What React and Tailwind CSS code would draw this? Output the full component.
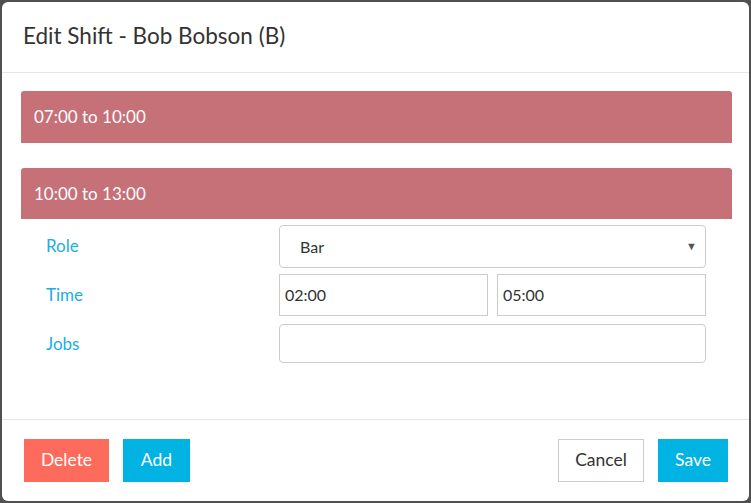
import React from "react";

export default function App() {
  const font = { fontFamily: "Lato, 'Noto Sans', sans-serif" };
  return (
    <div className="w-[751px] h-[503px] bg-[#505050] p-[2px]" style={font}>
      <div className="w-full h-full bg-white rounded-[6px] flex flex-col overflow-hidden">
        <div className="h-[71px] shrink-0 border-b border-[#e5e5e5] flex items-center pl-[21px]">
          <h1 className="text-[22.5px] text-[#333] leading-none -mt-[2px]">Edit Shift - Bob Bobson (B)</h1>
        </div>
        <div className="flex-1 pt-[18px] pl-[19px] pr-[17px]">
          <div className="h-[52px] bg-[#c67078] rounded-t-[3px] flex items-center pl-[13px]">
            <span className="text-white text-[17px]">07:00 to 10:00</span>
          </div>
          <div className="mt-[25px] h-[51px] bg-[#c67078] rounded-t-[3px] flex items-center pl-[13px]">
            <span className="text-white text-[17px]">10:00 to 13:00</span>
          </div>
          <div className="flex flex-col gap-[6px] mt-[6px] pl-[25px] pr-[26px]">
            <div className="flex items-center">
              <label className="w-[233px] text-[17px] text-[#1aaee3] -mt-[2px]">Role</label>
              <div className="flex-1 h-[43px] border border-[#ccc] rounded-[4px] flex items-center pl-[20px] pr-[8px] justify-between">
                <span className="text-[16px] text-[#333]">Bar</span>
                <span className="text-[11px] text-[#555]">▼</span>
              </div>
            </div>
            <div className="flex items-center">
              <label className="w-[233px] text-[17px] text-[#1aaee3]">Time</label>
              <div className="flex-1 flex gap-[9px]">
                <div className="flex-1 h-[42px] border border-[#ccc] flex items-center pl-[5px] text-[16px] text-[#333]">02:00</div>
                <div className="flex-1 h-[42px] border border-[#ccc] flex items-center pl-[5px] text-[16px] text-[#333]">05:00</div>
              </div>
            </div>
            <div className="flex items-center mt-[2px]">
              <label className="w-[233px] text-[17px] text-[#1aaee3]">Jobs</label>
              <div className="flex-1 h-[39px] border border-[#ccc] rounded-[4px]"></div>
            </div>
          </div>
        </div>
        <div className="h-[82px] shrink-0 border-t border-[#e5e5e5] flex items-start justify-between pt-[19px] pl-[22px] pr-[21px]">
          <div className="flex gap-[14px]">
            <button className="h-[43px] w-[85px] bg-[#fd6b5c] text-white text-[17.5px]">Delete</button>
            <button className="h-[43px] w-[67px] bg-[#00b3e2] text-white text-[17.5px]">Add</button>
          </div>
          <div className="flex gap-[14px]">
            <button className="h-[43px] w-[86px] border border-[#ccc] bg-white text-[#333] text-[17.5px]">Cancel</button>
            <button className="h-[43px] w-[70px] bg-[#00b3e2] text-white text-[17.5px]">Save</button>
          </div>
        </div>
      </div>
    </div>
  );
}
